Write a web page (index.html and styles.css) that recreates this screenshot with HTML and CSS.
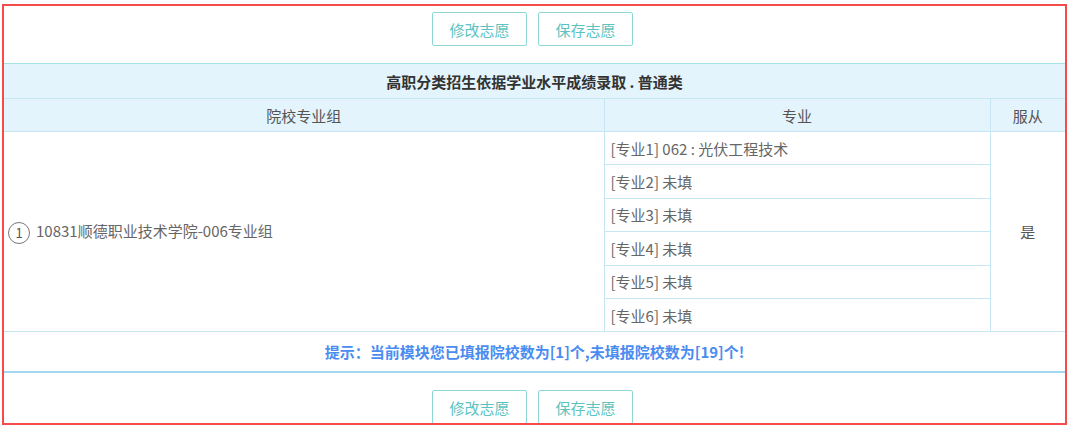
FILE: index.html
```html
<!DOCTYPE html>
<html lang="zh-CN">
<head>
  <meta charset="UTF-8">
  <title>志愿填报</title>
  <link rel="stylesheet" href="styles.css">
</head>
<body>
  <div class="frame">
    <div class="actions">
      <button class="btn">修改志愿</button>
      <button class="btn">保存志愿</button>
    </div>

    <table class="wish-table">
      <colgroup>
        <col class="col-group">
        <col class="col-major">
        <col class="col-obey">
      </colgroup>
      <tr>
        <th colspan="3" class="title">高职分类招生依据学业水平成绩录取 . 普通类</th>
      </tr>
      <tr>
        <th class="first">院校专业组</th>
        <th>专业</th>
        <th class="last">服从</th>
      </tr>
      <tr>
        <td rowspan="6" class="group-cell"><span class="num">1</span>10831顺德职业技术学院-006专业组</td>
        <td class="major">[专业1] 062 : 光伏工程技术</td>
        <td rowspan="6" class="obey">是</td>
      </tr>
      <tr><td class="major">[专业2] 未填</td></tr>
      <tr><td class="major">[专业3] 未填</td></tr>
      <tr><td class="major">[专业4] 未填</td></tr>
      <tr><td class="major">[专业5] 未填</td></tr>
      <tr><td class="major">[专业6] 未填</td></tr>
      <tr>
        <td colspan="3" class="hint">提示：当前模块您已填报院校数为[1]个,未填报院校数为[19]个!</td>
      </tr>
    </table>

    <div class="actions bottom">
      <button class="btn">修改志愿</button>
      <button class="btn">保存志愿</button>
    </div>
  </div>
</body>
</html>
```

FILE: styles.css
```css
body {
  margin: 0;
  background: #fff;
  font-family: "Noto Sans CJK SC", "Liberation Sans", sans-serif;
  font-size: 15px;
}

.frame {
  box-sizing: border-box;
  width: 1065px;
  height: 421px;
  margin: 4px 0 0 2px;
  border: 2px solid #f54b4b;
  overflow: hidden;
}

.actions {
  display: flex;
  justify-content: center;
  gap: 11px;
  padding: 6px 4px 17px 0;
}

.actions.bottom {
  padding: 17px 4px 0 0;
}

.btn {
  width: 95px;
  height: 34px;
  background: #fff;
  border: 1px solid #8ed9d6;
  border-radius: 2px;
  color: #5cc3c0;
  font-family: inherit;
  font-size: 15px;
  padding: 0;
}

.wish-table {
  width: 100%;
  border-collapse: collapse;
  table-layout: fixed;
}

.col-group {
  width: 600px;
}

.col-major {
  width: 386px;
}

.wish-table th,
.wish-table td {
  border: 1px solid #c6e6f3;
  padding: 0;
  font-weight: normal;
}

.wish-table th {
  background: #e3f4fc;
  color: #555;
  height: 32px;
}

.wish-table .title {
  border-top: 1px solid #a7e2e3;
  border-left: none;
  border-right: none;
  color: #333;
  font-weight: bold;
  height: 34px;
}

.wish-table .first,
.wish-table .group-cell {
  border-left: none;
}

.wish-table .last,
.wish-table .obey {
  border-right: none;
}

.wish-table .group-cell {
  color: #666;
  padding-left: 4px;
}

.num {
  display: inline-flex;
  align-items: center;
  justify-content: center;
  box-sizing: border-box;
  width: 22px;
  height: 22px;
  margin-right: 6px;
  border: 1px solid #777;
  border-radius: 50%;
  color: #555;
  font-size: 13px;
  vertical-align: middle;
}

.wish-table .major {
  height: 32.4px;
  color: #666;
  padding-left: 6px;
}

.wish-table .obey {
  text-align: center;
  color: #555;
}

.wish-table .hint {
  height: 39px;
  text-align: center;
  color: #4a8cf0;
  font-weight: bold;
  border-left: none;
  border-right: none;
  border-bottom: 2px solid #a3d7f1;
}
```
